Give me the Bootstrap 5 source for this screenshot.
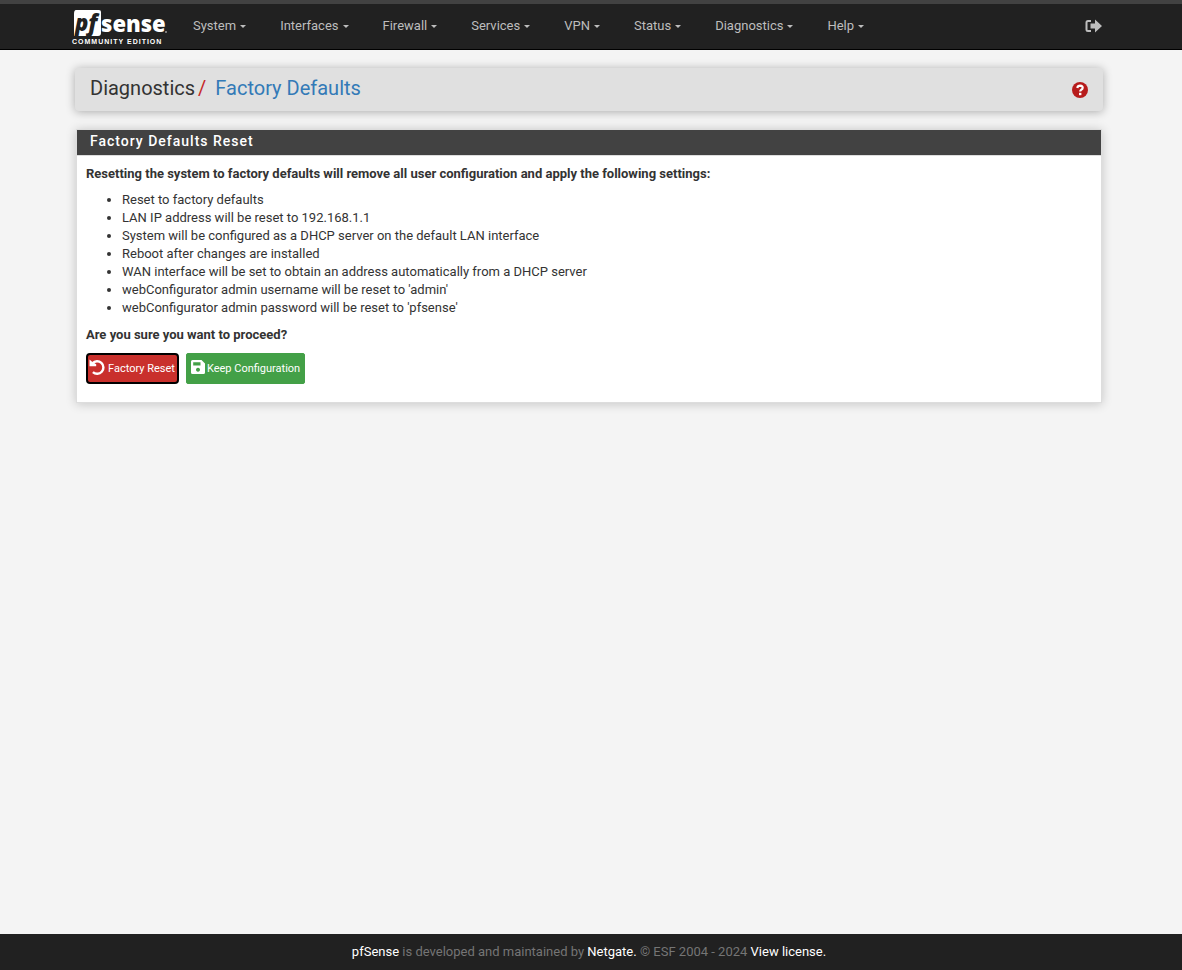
<!DOCTYPE html>
<html lang="en">
<head>
<meta charset="utf-8">
<meta name="viewport" content="width=device-width, initial-scale=1">
<title>Diagnostics: Factory Defaults</title>
<link rel="stylesheet" href="https://cdn.jsdelivr.net/npm/bootstrap@5.3.0/dist/css/bootstrap.min.css">
<style>
  body { font-family: Roboto, "Liberation Sans", sans-serif; font-size: 13px; line-height: 18px; color: #333; background: #f4f4f4; }
  a { text-decoration: none; }
  .page-width { width: 100%; max-width: 1034px; margin: 0 auto; padding: 0 4px; }
  .page-frame { padding-right: 4px; }
  .topbar { background: #212121; border-top: 4px solid #424242; border-bottom: 1px solid #000; height: 50px; padding-bottom: 2px; }
  .brand-logo { display: block; margin-left: -5px; }
  .main-menu { padding-left: 1px; }
  .main-menu .nav-link { color: #bdbdbd; padding: 0 17px; line-height: 18px; font-size: 13px; }
  .main-menu .nav-link:hover { color: #fff; }
  .main-menu .dropdown-toggle::after { border-width: 3px 3px 0; margin-left: 4px; vertical-align: 2px; }
  .crumb-bar { background: #e0e0e0; border-radius: 4px; box-shadow: 0 1px 10px rgba(0,0,0,.3); height: 43px; margin: 18px -1px; padding: 0 15px; }
  .crumb-bar ol { font-size: 20px; line-height: 24px; padding-bottom: 4px; }
  .crumb-sep { color: #c62828; margin: 0 9px 0 3px; }
  .crumb-bar a { color: #337ab7; }
  .panel-box { border: 1px solid #ddd; border-radius: 0; box-shadow: 0 1px 10px rgba(0,0,0,.2); }
  .panel-box .card-header { background: #424242; border-bottom: 1px solid #ddd; border-radius: 0; padding: 2px 13px 5px; }
  .panel-box h2 { font-size: 14px; line-height: 18px; font-weight: 500; letter-spacing: 1px; color: #fff; }
  .panel-box .card-body { padding: 9px 9px 18px; color: #333; }
  .panel-box ul { padding-left: 36px; margin-bottom: 9px; }
  .ask { margin-bottom: 9px; }
  .act-row { gap: 7px; }
  .act { font-size: 11px; line-height: 18px; color: #fff; border-radius: 2px; padding: 0 4px; height: 31px; border: 1px solid transparent; gap: 2px; }
  .act:hover { color: #fff; opacity: .9; }
  .act-danger, .act-danger:hover { background: #c9302c; border: 2px solid #000; border-radius: 4px; padding: 0 2px 0 1px; }
  .act-success, .act-success:hover { background: #43a047; border-color: #43a047; }
  .act svg { margin-bottom: 3px; }
  .site-footer { background: #212121; color: #757575; height: 36px; }
  .site-footer a { color: #fff; }
</style>
</head>
<body class="d-flex flex-column min-vh-100">
<header class="topbar page-frame">
  <div class="page-width d-flex align-items-center h-100">
    <a href="#" class="flex-shrink-0" aria-label="pfSense Community Edition">
      <svg class="brand-logo" width="104" height="41" viewBox="0 0 104 41">
        <path d="M5 5H28Q30 5 30 7V28Q30 31 27 31H3V9Q3 5 5 5Z" fill="#fff"/>
        <text x="4" y="26" font-family="Open Sans, sans-serif" font-weight="800" font-style="italic" font-size="22" fill="#212121">pf</text>
        <text x="30" y="27" font-family="Open Sans, sans-serif" font-weight="800" font-size="22" fill="#fff">sense</text>
        <circle cx="95" cy="27" r="1" fill="#999"/>
        <text x="1" y="39" font-family="Liberation Sans, sans-serif" font-size="7" font-weight="700" letter-spacing="1" fill="#fff">COMMUNITY EDITION</text>
      </svg>
    </a>
    <nav class="main-menu flex-grow-1" aria-label="Main">
      <ul class="nav flex-nowrap">
        <li class="nav-item dropdown"><a class="nav-link dropdown-toggle" href="#">System</a></li>
        <li class="nav-item dropdown"><a class="nav-link dropdown-toggle" href="#">Interfaces</a></li>
        <li class="nav-item dropdown"><a class="nav-link dropdown-toggle" href="#">Firewall</a></li>
        <li class="nav-item dropdown"><a class="nav-link dropdown-toggle" href="#">Services</a></li>
        <li class="nav-item dropdown"><a class="nav-link dropdown-toggle" href="#">VPN</a></li>
        <li class="nav-item dropdown"><a class="nav-link dropdown-toggle" href="#">Status</a></li>
        <li class="nav-item dropdown"><a class="nav-link dropdown-toggle" href="#">Diagnostics</a></li>
        <li class="nav-item dropdown"><a class="nav-link dropdown-toggle" href="#">Help</a></li>
      </ul>
    </nav>
    <a href="#" aria-label="Log out">
      <svg class="d-block" width="17" height="14" viewBox="0 0 17 14"><path d="M6 2H3Q1.500 2 1.500 3.500V10.500Q1.500 12 3 12H6" fill="none" stroke="#bdbdbd" stroke-width="2"/><path d="M5.500 4.500H10V.5L17 7L10 13.500V9.500H5.500Z" fill="#bdbdbd"/></svg>
    </a>
  </div>
</header>

<main class="page-frame flex-grow-1">
  <div class="page-width">
    <div class="crumb-bar d-flex justify-content-between align-items-center">
      <nav aria-label="Breadcrumb">
        <ol class="list-unstyled d-flex mb-0">
          <li>Diagnostics</li>
          <li><span class="crumb-sep">/</span><a href="#">Factory Defaults</a></li>
        </ol>
      </nav>
      <a href="#" aria-label="Help">
        <svg class="d-block" width="16" height="16" viewBox="0 0 16 16"><circle cx="8" cy="8" r="8" fill="#b71c1c"/><path d="M5.300 6Q5.700 3.600 8.100 3.600Q10.700 3.700 10.700 5.800Q10.700 7 9.300 7.700Q8.200 8.300 8.200 9.500" fill="none" stroke="#fff" stroke-width="2.200"/><path d="M7 10.800h2.400v2.400H7z" fill="#fff"/></svg>
      </a>
    </div>

    <section class="card panel-box">
      <div class="card-header"><h2 class="mb-0">Factory Defaults Reset</h2></div>
      <div class="card-body">
        <p class="fw-bold mb-2">Resetting the system to factory defaults will remove all user configuration and apply the following settings:</p>
        <ul>
          <li>Reset to factory defaults</li>
          <li>LAN IP address will be reset to 192.168.1.1</li>
          <li>System will be configured as a DHCP server on the default LAN interface</li>
          <li>Reboot after changes are installed</li>
          <li>WAN interface will be set to obtain an address automatically from a DHCP server</li>
          <li>webConfigurator admin username will be reset to 'admin'</li>
          <li>webConfigurator admin password will be reset to 'pfsense'</li>
        </ul>
        <p class="fw-bold ask">Are you sure you want to proceed?</p>
        <form class="act-row d-flex">
          <button type="button" class="btn act act-danger d-flex align-items-center">
            <svg width="17" height="17" viewBox="0 0 17 17"><path d="M3.500 4.200A6.300 6.300 0 1 1 3.900 13.200" fill="none" stroke="#fff" stroke-width="2.400"/><path d="M.5.5L2.800 2.600L7.200 5.200V7.200H.5Z" fill="#fff"/></svg>
            Factory Reset
          </button>
          <button type="button" class="btn act act-success d-flex align-items-center">
            <svg width="14" height="14" viewBox="0 0 14 14"><path fill-rule="evenodd" fill="#fff" d="M1.500 0H10.500L14 3.500V12.500Q14 14 12.500 14H1.500Q0 14 0 12.500V1.500Q0 0 1.500 0ZM2.200 2.200V5.400H9.500V2.200ZM7 7.800a2 2 0 1 0 .01 0Z"/></svg>
            Keep Configuration
          </button>
        </form>
      </div>
    </section>
  </div>
</main>

<footer class="site-footer page-frame d-flex align-items-center justify-content-center">
  <p class="mb-0"><a href="#">pfSense</a> is developed and maintained by <a href="#">Netgate.</a> © ESF 2004 - 2024 <a href="#">View license.</a></p>
</footer>
<script src="https://cdn.jsdelivr.net/npm/bootstrap@5.3.0/dist/js/bootstrap.bundle.min.js"></script>
</body>
</html>
